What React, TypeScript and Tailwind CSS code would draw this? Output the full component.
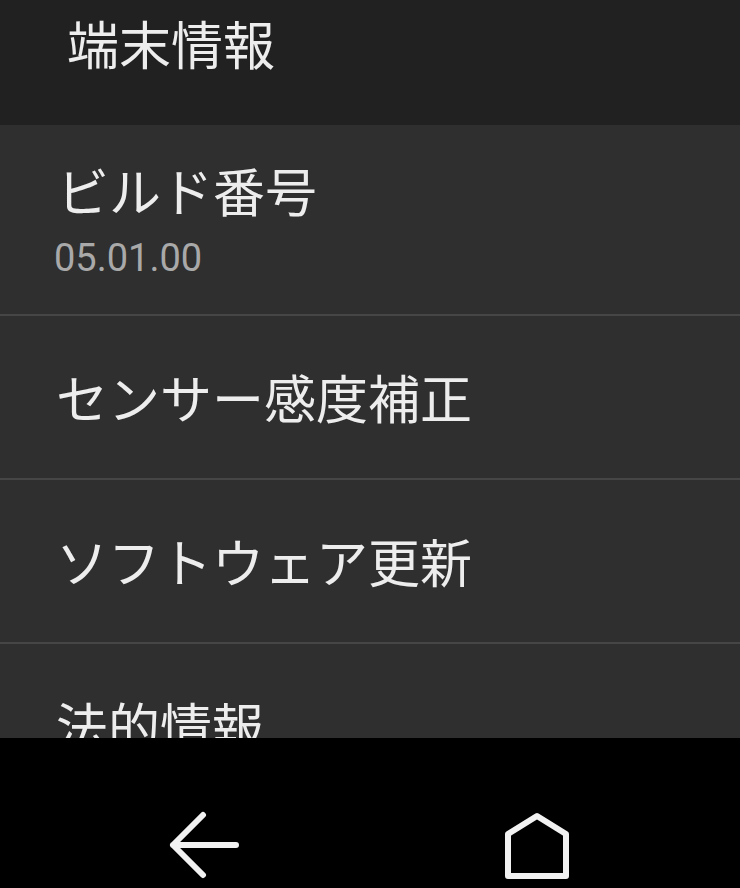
import React from 'react';

const cjk = "font-['Noto_Sans_CJK_JP',sans-serif]";

const rows = ['センサー感度補正', 'ソフトウェア更新', '法的情報'];

export default function App() {
  return (
    <div className="flex h-[888px] w-[740px] flex-col overflow-hidden bg-[#2f2f2f] text-[#ededed]">
      {/* action bar */}
      <div className="h-[125px] shrink-0 bg-[#212121] pl-[67px] pt-[17px]">
        <h1 className={`${cjk} text-[52px] leading-none`}>端末情報</h1>
      </div>

      {/* settings list */}
      <div className="flex-1 overflow-hidden">
        <div className="border-b-2 border-[#464646] pb-[37px] pl-[57px] pt-[39px]">
          <div className={`${cjk} text-[52px] leading-none`}>ビルド番号</div>
          <div className="-ml-[3px] mt-[23px] font-['Roboto',sans-serif] text-[38px] leading-none text-[#a9a9a9]">
            05.01.00
          </div>
        </div>
        {rows.map((label) => (
          <div
            key={label}
            className="flex h-[164px] items-center border-b-2 border-[#464646] pl-[56px]"
          >
            <span className={`${cjk} text-[52px] leading-none`}>{label}</span>
          </div>
        ))}
      </div>

      {/* navigation bar */}
      <div className="flex h-[150px] shrink-0 items-start gap-[263px] bg-black pl-[169px] pt-[72px]">
        <svg width="70" height="70" viewBox="0 0 70 70" fill="none" stroke="#f2f2f2" strokeWidth="6" strokeLinecap="round" strokeLinejoin="round">
          <path d="M34 5 L4 35 L34 65 M4 35 H67" />
        </svg>
        <svg width="70" height="70" viewBox="0 0 70 70" fill="none" stroke="#f2f2f2" strokeWidth="6" strokeLinecap="round" strokeLinejoin="round">
          <path d="M6 66 V24 L35 6 L64 24 V66 Z" />
        </svg>
      </div>
    </div>
  );
}
